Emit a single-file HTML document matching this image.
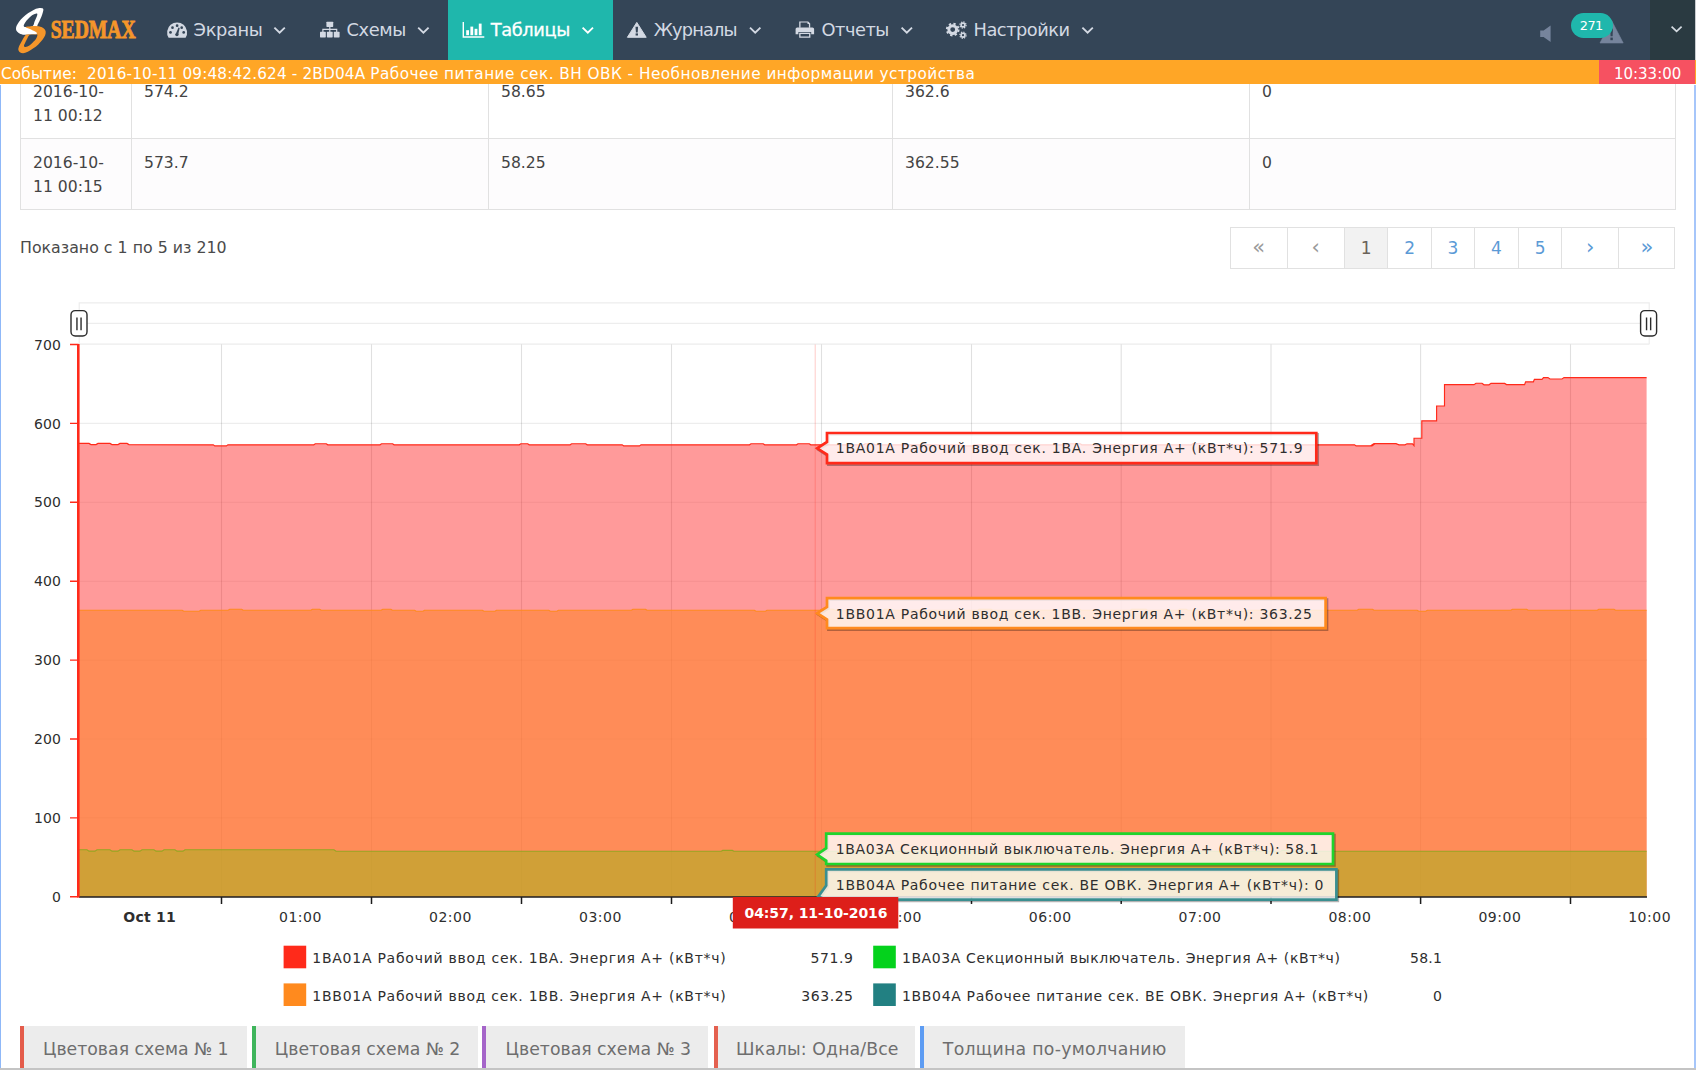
<!DOCTYPE html>
<html lang="ru">
<head>
<meta charset="utf-8">
<title>SEDMAX - Таблицы</title>
<style>
*{box-sizing:border-box;margin:0;padding:0}
html,body{width:1696px;height:1070px;overflow:hidden;background:#fff}
body{font-family:"DejaVu Sans","Liberation Sans",sans-serif;font-size:15.8px;color:#3a3a3a;position:relative}
#nav{z-index:7;position:absolute;left:0;top:0;width:1696px;height:60px;background:#344557}
#nav .it{position:absolute;top:0;height:60px;line-height:60px;font-size:17.8px;color:#d3d9e3;white-space:nowrap}
#nav .act{position:absolute;left:448px;top:0;width:164.5px;height:60px;background:#1fb7ac}
#nav svg{position:absolute}
#nav .dk{position:absolute;left:1650px;top:0;width:45px;height:60px;background:#2a3a41}
#nav .edge{position:absolute;left:1695px;top:0;width:1px;height:60px;background:#c9ccd0}
#badge{position:absolute;left:1571px;top:13px;width:41.5px;height:24.5px;border-radius:12.5px;background:#1fb7ac;color:#fff;font-size:12.9px;letter-spacing:-0.5px;line-height:26.6px;text-align:center;padding-right:1px}
#ev{z-index:5;position:absolute;left:0;top:60px;width:1696px;height:24.3px;background:#ffa626;color:#fff;font-size:15.3px;letter-spacing:0.46px;line-height:28px;white-space:pre;padding-left:1px;overflow:hidden}
#clk{z-index:6;position:absolute;left:1599px;top:60px;width:96.2px;height:24.3px;background:#f65161;color:#fff;font-size:15px;line-height:28px;text-align:center;padding-left:1px}
.ledge{position:absolute;left:0;top:84.5px;width:1.4px;height:985px;background:#8fb8f8}
.redge{position:absolute;left:1694.4px;top:84.5px;width:1.6px;height:985px;background:#a6c6fa}
#tbl{position:absolute;left:20px;top:66.7px;width:1654.4px;border-collapse:collapse;table-layout:fixed}
#tbl td{border:1px solid #e1e1e1;vertical-align:top;padding:12.3px 11.5px 9.7px 12px;line-height:24px;height:71px;font-size:15.6px;color:#444}
#tbl tr.alt td{background:#fdfcfd}
#info{position:absolute;left:20px;top:236px;line-height:24px;font-size:15.8px;color:#4a4a4a;white-space:nowrap}
#pg{position:absolute;left:1230px;top:226.5px;height:42px;width:445px}
#pg span{position:absolute;top:0;height:42px;border:1px solid #e1e1e1;line-height:40px;text-align:center;font-size:17px;color:#5b9ad6;background:#fff}
#pg span.dis{color:#9a9a9a}
#pg span.ar{font-size:21px;line-height:39.6px}
#pg span.cur{background:#f2f2f2;color:#6a6259}
#chart{position:absolute;left:0;top:290px}
#chart text{font-family:"DejaVu Sans","Liberation Sans",sans-serif;font-size:14px;fill:#2e2e2e}
.btn{position:absolute;top:1026px;height:41.5px;background:#ececec;border-left:4.3px solid #e35b4b;color:#6e6e6e;font-size:17.3px;line-height:47px;white-space:nowrap;padding-left:19.2px}
#bot{position:absolute;left:0;top:1068px;width:1696px;height:2px;background:#c4c4c4}
</style>
</head>
<body>
<div id="nav">
 <div class="act"></div>
 <div class="dk"></div>
 <div class="edge"></div>
 <div class="it" style="left:193.6px;letter-spacing:-0.35px">Экраны</div>
 <div class="it" style="left:346.6px;letter-spacing:-0.4px">Схемы</div>
 <div class="it" style="left:490.8px;letter-spacing:-0.4px;color:#fff;-webkit-text-stroke:0.3px #fff">Таблицы</div>
 <div class="it" style="left:653.8px;letter-spacing:-0.85px">Журналы</div>
 <div class="it" style="left:821.6px;letter-spacing:-0.5px">Отчеты</div>
 <div class="it" style="left:973.6px;letter-spacing:-0.5px">Настройки</div>
 <svg width="1696" height="60" viewBox="0 0 1696 60" style="left:0;top:0">
  <!-- logo -->
  <path fill="#fff" fill-rule="evenodd" d="M43.1,8.7 C42.3,8.0 39.9,8.0 38.3,8.2 C36.7,8.4 35.2,9.1 33.6,9.9 C31.9,10.7 30.1,11.8 28.3,13.0 C26.6,14.2 24.7,15.7 23.1,17.2 C21.5,18.7 20.0,20.4 18.9,21.9 C17.8,23.4 17.0,24.9 16.5,26.1 C16.1,27.3 15.9,28.3 16.0,29.2 C16.2,30.2 16.6,31.1 17.3,31.8 C18.1,32.6 19.1,33.4 20.5,33.9 C21.9,34.4 23.8,34.8 25.7,34.8 C27.6,34.9 30.0,34.5 32.0,34.3 C34.0,34.1 36.6,34.8 37.5,33.4 C38.4,32.0 37.0,28.1 37.3,26.1 C37.6,24.1 38.6,22.9 39.3,21.4 C40.0,19.8 40.8,18.1 41.4,16.7 C42.0,15.2 42.5,13.8 42.8,12.5 C43.1,11.1 43.8,9.4 43.1,8.7Z M36.4,13.6 C35.6,13.8 33.9,14.2 32.5,15.1 C31.2,15.9 29.5,17.5 28.3,18.8 C27.1,20.0 26.0,21.2 25.2,22.4 C24.4,23.6 23.6,25.1 23.7,25.8 C23.8,26.6 24.2,27.0 25.7,27.0 C27.2,27.1 31.0,27.1 32.5,26.2 C34.0,25.2 33.9,23.0 34.6,21.4 C35.3,19.8 36.2,17.8 36.7,16.7 C37.2,15.5 37.4,14.8 37.3,14.3 C37.3,13.8 37.2,13.5 36.4,13.6Z"/>
  <path fill="#f5962a" fill-rule="evenodd" d="M25.6,27.1 C25.8,26.7 29.2,26.4 30.9,26.2 C32.7,26.0 34.4,25.8 36.2,26.0 C37.9,26.1 40.0,26.5 41.4,27.0 C42.8,27.6 43.8,28.4 44.6,29.2 C45.3,30.0 45.6,30.8 45.7,31.8 C45.8,32.9 45.6,34.2 45.1,35.5 C44.5,36.8 43.6,38.2 42.5,39.7 C41.3,41.2 39.8,42.9 38.3,44.4 C36.7,45.9 34.8,47.4 33.0,48.6 C31.3,49.8 29.5,51.0 27.8,51.7 C26.1,52.5 24.4,53.1 23.1,53.2 C21.8,53.2 20.8,52.8 19.9,52.3 C19.1,51.7 18.4,50.8 18.3,49.6 C18.2,48.5 18.8,46.9 19.4,45.5 C20.1,44.0 21.1,42.4 22.0,40.7 C23.0,39.1 24.3,36.5 25.2,35.5 C26.1,34.5 26.1,34.8 27.3,34.6 C28.5,34.3 30.9,34.4 32.5,34.2 C34.2,34.0 36.9,33.9 37.2,33.4 C37.6,32.9 35.8,32.1 34.6,31.3 C33.4,30.6 31.4,29.7 29.9,29.0 C28.4,28.3 25.4,27.6 25.6,27.1Z M37.3,34.6 C37.8,35.2 36.9,37.4 36.2,38.6 C35.5,39.9 34.2,41.2 33.0,42.3 C31.9,43.4 30.6,44.7 29.4,45.5 C28.2,46.2 26.6,46.9 25.7,47.0 C24.8,47.1 24.1,46.7 24.0,46.0 C23.9,45.3 24.6,44.1 25.2,42.8 C25.7,41.6 26.6,39.9 27.3,38.6 C28.0,37.4 28.4,35.8 29.5,35.1 C30.5,34.4 32.3,34.7 33.6,34.6 C34.9,34.5 36.9,33.9 37.3,34.6Z"/>
  <text x="50.7" y="37.7" textLength="85" lengthAdjust="spacingAndGlyphs" style="font-family:'Liberation Serif','DejaVu Serif',serif;font-weight:bold;font-size:25.2px;fill:#f5962a;stroke:#f5962a;stroke-width:0.9px">SEDMAX</text>
  <g fill="#d3d9e3" stroke="none">
   <!-- dashboard -->
   <path d="M168.6,37.7 A10,10 0 1 1 185.6,37.7 Z"/>
   <g fill="#344557"><circle cx="170.5" cy="32.4" r="1.35"/><circle cx="172.5" cy="27.7" r="1.35"/><circle cx="177.1" cy="25.7" r="1.35"/><circle cx="181.7" cy="27.7" r="1.35"/><circle cx="183.7" cy="32.4" r="1.35"/><path d="M175.9,33.6 L178.5,27.6 L179.7,28.1 L178.2,34.4 Z"/><circle cx="176.9" cy="34.6" r="1.7"/></g>
   <!-- sitemap -->
   <rect x="326.4" y="21.7" width="6.8" height="5.2" rx="0.6"/><rect x="320" y="31.8" width="5.8" height="5.6" rx="0.6"/><rect x="326.9" y="31.8" width="5.8" height="5.6" rx="0.6"/><rect x="333.8" y="31.8" width="5.8" height="5.6" rx="0.6"/>
   <path d="M329.2,26.5h1.2v2.3h6.9v3.2h-1.2v-2h-5.7v2h-1.2v-2h-5.7v2h-1.2v-3.2h6.9z"/>
   <!-- bar chart -->
   <g fill="#fff"><path d="M462.6,21.9h1.4v14.4h20.3v1.4h-21.7z"/><rect x="466.2" y="30.2" width="2.8" height="5"/><rect x="470.4" y="26.6" width="2.8" height="8.6"/><rect x="474.6" y="28.8" width="2.8" height="6.4"/><rect x="478.8" y="23.6" width="2.8" height="11.6"/></g>
   <!-- warning -->
   <path d="M636.8,22.4 L646.2,37.3 L627.4,37.3 Z" stroke="#d3d9e3" stroke-width="1" stroke-linejoin="round"/>
   <g fill="#344557"><path d="M635.5,26.8h2.6l-0.4,5.6h-1.8z"/><rect x="635.6" y="33.4" width="2.4" height="2.1"/></g>
   <!-- print -->
   <path d="M799.2,21.4h9l2,2v4.4h-1.3v-3.8h-1.4v-1.4h-7v5.2h-1.3z"/><path d="M797.2,27.4h15.2q1.7,0 1.7,1.7v5.2h-2.9v-2.4h-12.8v2.4h-2.8v-5.2q0,-1.7 1.6,-1.7z"/><path d="M799.2,32.8h11.2v4.9h-11.2z M800.5,34.1v2.3h8.6v-2.3z" fill-rule="evenodd"/>
   <!-- cogs -->
   <circle cx="952.7" cy="29.6" r="3.9" fill="none" stroke="#d3d9e3" stroke-width="2.9"/>
   <circle cx="952.7" cy="29.6" r="5.9" fill="none" stroke="#d3d9e3" stroke-width="1.9" stroke-dasharray="2.3 2.334"/>
   <circle cx="963" cy="25" r="1.9" fill="none" stroke="#d3d9e3" stroke-width="1.6"/><circle cx="963" cy="25" r="3.1" fill="none" stroke="#d3d9e3" stroke-width="1.2" stroke-dasharray="1.3 1.13"/>
   <circle cx="963" cy="35.2" r="1.9" fill="none" stroke="#d3d9e3" stroke-width="1.6"/><circle cx="963" cy="35.2" r="3.1" fill="none" stroke="#d3d9e3" stroke-width="1.2" stroke-dasharray="1.3 1.13"/>
  </g>
  <!-- chevrons -->
  <g fill="none" stroke="#d3d9e3" stroke-width="1.9" stroke-linejoin="miter">
   <path d="M274.4,27.6l5.2,5 5.2,-5"/><path d="M418.2,27.6l5.2,5 5.2,-5"/><path d="M750,27.6l5.2,5 5.2,-5"/><path d="M901.6,27.6l5.2,5 5.2,-5"/><path d="M1082.4,27.6l5.2,5 5.2,-5"/>
   <path d="M582.6,27.6l5.2,5 5.2,-5" stroke="#fff"/>
   <path d="M1671.6,26.6l5,4.8 5,-4.8" stroke="#d5dbe2" stroke-width="1.7"/>
  </g>
  <!-- speaker + alert -->
  <path d="M1540.2,30.4h3.4l7,-5v16.6l-7,-5h-3.4z" fill="#76849c"/>
  <path d="M1611.6,20.6 L1623.2,43 L1600,43 Z" fill="#76849c" stroke="#76849c" stroke-width="0.6" stroke-linejoin="round"/>
  <g fill="#344557"><path d="M1610.2,28.6h2.8l-0.4,7.6h-2z"/><rect x="1610.4" y="37.6" width="2.4" height="2.6"/></g>
 </svg>
 <div id="badge">271</div>
</div>
<div id="ev"><span style="letter-spacing:0.14px">Событие:  2016-10-11 09:48:42.624 - 2BD04A </span>Рабочее питание сек. ВН ОВК - Необновление информации устройства</div>
<div id="clk">10:33:00</div>
<div class="ledge"></div><div class="redge"></div>

<table id="tbl">
 <colgroup><col style="width:111px"><col style="width:357px"><col style="width:404px"><col style="width:357px"><col style="width:426px"></colgroup>
 <tr><td>2016-10-<br>11 00:12</td><td>574.2</td><td>58.65</td><td>362.6</td><td>0</td></tr>
 <tr class="alt"><td>2016-10-<br>11 00:15</td><td>573.7</td><td>58.25</td><td>362.55</td><td>0</td></tr>
</table>
<div id="info">Показано с 1 по 5 из 210</div>
<div id="pg">
 <span class="dis ar" style="left:0;width:57.6px">«</span><span class="dis ar" style="left:56.6px;width:58.4px">‹</span><span class="cur" style="left:114px;width:44.4px">1</span><span style="left:157.4px;width:44.4px">2</span><span style="left:200.8px;width:44.2px">3</span><span style="left:244px;width:45px">4</span><span style="left:288px;width:44.2px">5</span><span class="ar" style="left:331.2px;width:58.2px">›</span><span class="ar" style="left:388.4px;width:57px">»</span>
</div>

<svg id="chart" width="1696" height="735" viewBox="0 290 1696 735">
<g fill="none" stroke="#ededed" stroke-width="1.2"><path d="M79.2,344.3V302.8H1649.2V344.3"/><path d="M79.2,323.3H1649.2"/><path d="M79,344.2H1649.2" stroke="#ececec"/></g>
<path d="M221.5,344.5V896.8 M371.5,344.5V896.8 M521.5,344.5V896.8 M671.5,344.5V896.8 M821.5,344.5V896.8 M971.5,344.5V896.8 M1121.2,344.5V896.8 M1271,344.5V896.8 M1420.6,344.5V896.8 M1570.5,344.5V896.8" fill="none" stroke="#000" stroke-opacity="0.12" stroke-width="1.1"/>
<path d="M79,817.9H1647 M79,739.0H1647 M79,660.1H1647 M79,581.2H1647 M79,502.3H1647 M79,423.4H1647" fill="none" stroke="#000" stroke-opacity="0.07" stroke-width="1.1"/>
<path d="M79.0,443.4 L89.0,443.4 L91.0,444.6 L96.0,444.6 L98.0,443.4 L110.0,443.4 L112.0,444.6 L118.0,444.6 L120.0,443.4 L127.0,443.4 L129.0,444.6 L213.3,444.8 L214.8,445.9 L226.4,445.9 L227.9,444.8 L313.8,444.8 L315.3,443.7 L326.3,443.7 L327.8,444.8 L380.0,444.8 L381.5,443.7 L392.6,443.7 L394.1,444.8 L519.3,444.8 L520.8,443.7 L527.7,443.7 L529.2,444.8 L570.1,444.8 L571.6,443.7 L585.7,443.7 L587.2,444.8 L622.2,444.8 L623.7,445.9 L639.5,445.9 L641.0,444.8 L749.5,444.8 L751.0,443.7 L763.2,443.7 L764.7,444.8 L796.5,444.8 L798.0,443.7 L809.3,443.7 L810.8,444.8 L863.6,444.8 L865.1,443.7 L873.5,443.7 L875.0,444.8 L960.7,444.8 L962.2,445.9 L972.6,445.9 L974.1,444.8 L1066.4,444.8 L1067.9,443.7 L1080.3,443.7 L1081.8,444.8 L1191.3,444.8 L1192.8,443.7 L1203.3,443.7 L1204.8,444.8 L1354.6,444.8 L1356.1,445.9 L1372.0,445.9 L1373.5,444.8 L1372.0,444.8 L1374.0,443.6 L1396.0,443.6 L1399.0,444.8 L1405.0,444.8 L1407.0,443.8 L1412.5,443.8 L1414.0,445.6 L1414.0,438.2 L1421.8,438.2 L1421.8,420.8 L1436.6,420.8 L1436.6,406.0 L1444.5,406.0 L1444.5,384.6 L1474.0,384.6 L1476.0,383.2 L1482.0,383.2 L1484.0,384.8 L1489.0,384.8 L1491.0,383.4 L1504.7,383.4 L1506.5,384.6 L1524.6,384.6 L1525.6,381.8 L1533.4,381.8 L1534.4,379.4 L1542.0,379.4 L1543.5,377.6 L1548.0,377.6 L1550.0,379.0 L1562.0,379.0 L1564.0,377.6 L1646.6,377.6 L1646.6,896.8 L79.0,896.8 Z" fill="#ff0f0f" fill-opacity="0.42"/>
<path d="M79.0,443.4 L89.0,443.4 L91.0,444.6 L96.0,444.6 L98.0,443.4 L110.0,443.4 L112.0,444.6 L118.0,444.6 L120.0,443.4 L127.0,443.4 L129.0,444.6 L213.3,444.8 L214.8,445.9 L226.4,445.9 L227.9,444.8 L313.8,444.8 L315.3,443.7 L326.3,443.7 L327.8,444.8 L380.0,444.8 L381.5,443.7 L392.6,443.7 L394.1,444.8 L519.3,444.8 L520.8,443.7 L527.7,443.7 L529.2,444.8 L570.1,444.8 L571.6,443.7 L585.7,443.7 L587.2,444.8 L622.2,444.8 L623.7,445.9 L639.5,445.9 L641.0,444.8 L749.5,444.8 L751.0,443.7 L763.2,443.7 L764.7,444.8 L796.5,444.8 L798.0,443.7 L809.3,443.7 L810.8,444.8 L863.6,444.8 L865.1,443.7 L873.5,443.7 L875.0,444.8 L960.7,444.8 L962.2,445.9 L972.6,445.9 L974.1,444.8 L1066.4,444.8 L1067.9,443.7 L1080.3,443.7 L1081.8,444.8 L1191.3,444.8 L1192.8,443.7 L1203.3,443.7 L1204.8,444.8 L1354.6,444.8 L1356.1,445.9 L1372.0,445.9 L1373.5,444.8 L1372.0,444.8 L1374.0,443.6 L1396.0,443.6 L1399.0,444.8 L1405.0,444.8 L1407.0,443.8 L1412.5,443.8 L1414.0,445.6 L1414.0,438.2 L1421.8,438.2 L1421.8,420.8 L1436.6,420.8 L1436.6,406.0 L1444.5,406.0 L1444.5,384.6 L1474.0,384.6 L1476.0,383.2 L1482.0,383.2 L1484.0,384.8 L1489.0,384.8 L1491.0,383.4 L1504.7,383.4 L1506.5,384.6 L1524.6,384.6 L1525.6,381.8 L1533.4,381.8 L1534.4,379.4 L1542.0,379.4 L1543.5,377.6 L1548.0,377.6 L1550.0,379.0 L1562.0,379.0 L1564.0,377.6 L1646.6,377.6" fill="none" stroke="#ff2a1a" stroke-width="1.15"/>
<path d="M79.0,610.2 L182.2,610.2 L183.7,611.2 L199.2,611.2 L200.7,610.2 L228.2,610.2 L229.7,609.2 L241.7,609.2 L243.2,610.2 L310.9,610.2 L312.4,609.2 L319.7,609.2 L321.2,610.2 L381.2,610.2 L382.7,609.2 L390.9,609.2 L392.4,610.2 L414.6,610.2 L416.1,611.2 L423.0,611.2 L424.5,610.2 L482.4,610.2 L483.9,611.2 L495.0,611.2 L496.5,610.2 L548.8,610.2 L550.3,611.2 L556.9,611.2 L558.4,610.2 L631.4,610.2 L632.9,609.2 L645.5,609.2 L647.0,610.2 L754.4,610.2 L755.9,611.2 L765.5,611.2 L767.0,610.2 L820.2,610.2 L821.7,609.2 L833.4,609.2 L834.9,610.2 L883.2,610.2 L884.7,609.2 L891.6,609.2 L893.1,610.2 L977.7,610.2 L979.2,609.2 L991.1,609.2 L992.6,610.2 L1070.4,610.2 L1071.9,609.2 L1079.7,609.2 L1081.2,610.2 L1130.3,610.2 L1131.8,609.2 L1146.0,609.2 L1147.5,610.2 L1177.8,610.2 L1179.3,609.2 L1186.2,609.2 L1187.7,610.2 L1232.5,610.2 L1234.0,611.2 L1245.8,611.2 L1247.3,610.2 L1297.0,610.2 L1298.5,609.2 L1308.2,609.2 L1309.7,610.2 L1357.2,610.2 L1358.7,609.2 L1372.5,609.2 L1374.0,610.2 L1417.2,610.2 L1418.7,611.2 L1425.8,611.2 L1427.3,610.2 L1510.9,610.2 L1512.4,609.2 L1526.7,609.2 L1528.2,610.2 L1597.3,610.2 L1598.8,609.2 L1614.0,609.2 L1615.5,610.2 L1646.6,610.2 L1646.6,896.8 L79.0,896.8 Z" fill="rgb(255,133,48)" fill-opacity="0.62"/>
<path d="M79.0,610.2 L182.2,610.2 L183.7,611.2 L199.2,611.2 L200.7,610.2 L228.2,610.2 L229.7,609.2 L241.7,609.2 L243.2,610.2 L310.9,610.2 L312.4,609.2 L319.7,609.2 L321.2,610.2 L381.2,610.2 L382.7,609.2 L390.9,609.2 L392.4,610.2 L414.6,610.2 L416.1,611.2 L423.0,611.2 L424.5,610.2 L482.4,610.2 L483.9,611.2 L495.0,611.2 L496.5,610.2 L548.8,610.2 L550.3,611.2 L556.9,611.2 L558.4,610.2 L631.4,610.2 L632.9,609.2 L645.5,609.2 L647.0,610.2 L754.4,610.2 L755.9,611.2 L765.5,611.2 L767.0,610.2 L820.2,610.2 L821.7,609.2 L833.4,609.2 L834.9,610.2 L883.2,610.2 L884.7,609.2 L891.6,609.2 L893.1,610.2 L977.7,610.2 L979.2,609.2 L991.1,609.2 L992.6,610.2 L1070.4,610.2 L1071.9,609.2 L1079.7,609.2 L1081.2,610.2 L1130.3,610.2 L1131.8,609.2 L1146.0,609.2 L1147.5,610.2 L1177.8,610.2 L1179.3,609.2 L1186.2,609.2 L1187.7,610.2 L1232.5,610.2 L1234.0,611.2 L1245.8,611.2 L1247.3,610.2 L1297.0,610.2 L1298.5,609.2 L1308.2,609.2 L1309.7,610.2 L1357.2,610.2 L1358.7,609.2 L1372.5,609.2 L1374.0,610.2 L1417.2,610.2 L1418.7,611.2 L1425.8,611.2 L1427.3,610.2 L1510.9,610.2 L1512.4,609.2 L1526.7,609.2 L1528.2,610.2 L1597.3,610.2 L1598.8,609.2 L1614.0,609.2 L1615.5,610.2 L1646.6,610.2" fill="none" stroke="#ff8a1e" stroke-width="1.1"/>
<path d="M79.0,849.8 L87.0,849.8 L89.0,851.1 L95.0,851.1 L97.0,849.8 L110.0,849.8 L112.0,851.1 L118.0,851.1 L120.0,849.8 L132.0,849.8 L134.0,851.1 L140.0,851.1 L142.0,849.8 L154.0,849.8 L156.0,851.1 L162.0,851.1 L164.0,849.8 L175.0,849.8 L177.0,851.1 L183.0,851.1 L185.0,849.8 L334.0,849.8 L336.0,851.2 L721.2,851.2 L722.7,850.4 L732.4,850.4 L733.9,851.2 L1280.6,851.2 L1282.1,850.4 L1288.1,850.4 L1289.6,851.2 L1646.6,851.2 L1646.6,896.8 L79.0,896.8 Z" fill="rgb(179,172,35)" fill-opacity="0.62"/>
<path d="M79.0,849.8 L87.0,849.8 L89.0,851.1 L95.0,851.1 L97.0,849.8 L110.0,849.8 L112.0,851.1 L118.0,851.1 L120.0,849.8 L132.0,849.8 L134.0,851.1 L140.0,851.1 L142.0,849.8 L154.0,849.8 L156.0,851.1 L162.0,851.1 L164.0,849.8 L175.0,849.8 L177.0,851.1 L183.0,851.1 L185.0,849.8 L334.0,849.8 L336.0,851.2 L721.2,851.2 L722.7,850.4 L732.4,850.4 L733.9,851.2 L1280.6,851.2 L1282.1,850.4 L1288.1,850.4 L1289.6,851.2 L1646.6,851.2" fill="none" stroke="#96a522" stroke-width="1.1"/>
<path d="M815.2,344.5V896.8" stroke="#ff2a1a" stroke-opacity="0.22" stroke-width="1.1"/>
<path d="M79,896.9H1647 M221.5,896.8V904 M371.5,896.8V904 M521.5,896.8V904 M671.5,896.8V904 M821.5,896.8V904 M971.5,896.8V904 M1121.2,896.8V904 M1271,896.8V904 M1420.6,896.8V904 M1570.5,896.8V904" fill="none" stroke="#1c1c1c" stroke-width="1.5"/>
<path d="M78.3,344V897.5" stroke="#ff2a1a" stroke-width="2.6" fill="none"/><path d="M70,896.8H78.5 M70,817.9H78.5 M70,739.0H78.5 M70,660.1H78.5 M70,581.2H78.5 M70,502.3H78.5 M70,423.4H78.5 M70,344.5H78.5" stroke="#ff2a1a" stroke-width="1.4" fill="none"/>
<text x="60.8" y="901.9" text-anchor="end">0</text>
<text x="60.8" y="823.0" text-anchor="end">100</text>
<text x="60.8" y="744.1" text-anchor="end">200</text>
<text x="60.8" y="665.2" text-anchor="end">300</text>
<text x="60.8" y="586.3" text-anchor="end">400</text>
<text x="60.8" y="507.4" text-anchor="end">500</text>
<text x="60.8" y="428.5" text-anchor="end">600</text>
<text x="60.8" y="349.6" text-anchor="end">700</text>
<text x="149.5" y="921.8" text-anchor="middle" font-weight="bold" textLength="52.3" lengthAdjust="spacing">Oct 11</text>
<text x="300.2" y="921.8" text-anchor="middle" textLength="42.4" lengthAdjust="spacing">01:00</text>
<text x="450.2" y="921.8" text-anchor="middle" textLength="42.4" lengthAdjust="spacing">02:00</text>
<text x="600.2" y="921.8" text-anchor="middle" textLength="42.4" lengthAdjust="spacing">03:00</text>
<text x="750.2" y="921.8" text-anchor="middle" textLength="42.4" lengthAdjust="spacing">04:00</text>
<text x="900.2" y="921.8" text-anchor="middle" textLength="42.4" lengthAdjust="spacing">05:00</text>
<text x="1050" y="921.8" text-anchor="middle" textLength="42.4" lengthAdjust="spacing">06:00</text>
<text x="1199.8" y="921.8" text-anchor="middle" textLength="42.4" lengthAdjust="spacing">07:00</text>
<text x="1349.6" y="921.8" text-anchor="middle" textLength="42.4" lengthAdjust="spacing">08:00</text>
<text x="1499.6" y="921.8" text-anchor="middle" textLength="42.4" lengthAdjust="spacing">09:00</text>
<text x="1649.4" y="921.8" text-anchor="middle" textLength="42.4" lengthAdjust="spacing">10:00</text>
<rect x="71" y="310.6" width="16" height="25.4" rx="4.2" fill="#fff" stroke="#2b2b2b" stroke-width="1.4"/><path d="M76.95,317.6V330.2M81.05,317.6V330.2" stroke="#2b2b2b" stroke-width="1.4"/>
<rect x="1640.6" y="310.6" width="16" height="25.4" rx="4.2" fill="#fff" stroke="#2b2b2b" stroke-width="1.4"/><path d="M1646.55,317.6V330.2M1650.6499999999999,317.6V330.2" stroke="#2b2b2b" stroke-width="1.4"/>
<path d="M827,433H1316.3V463.2H827V454.6L817.2,448.3L827,442.0Z" transform="translate(1.4,1.4)" fill="none" stroke="#000" stroke-opacity="0.3" stroke-width="2.7"/><path d="M827,433H1316.3V463.2H827V454.6L817.2,448.3L827,442.0Z" fill="#fff" fill-opacity="0.8" stroke="#ff2a1a" stroke-width="2.7" stroke-linejoin="miter"/><text x="835.8" y="453.4" textLength="466.8" lengthAdjust="spacing">1BA01A Рабочий ввод сек. 1BA. Энергия А+ (кВт*ч): 571.9</text>
<path d="M827,598.2H1325.6V628.2H827V619.5L817.2,613.2L827,606.9000000000001Z" transform="translate(1.4,1.4)" fill="none" stroke="#000" stroke-opacity="0.3" stroke-width="2.7"/><path d="M827,598.2H1325.6V628.2H827V619.5L817.2,613.2L827,606.9000000000001Z" fill="#fff" fill-opacity="0.8" stroke="#ff8a1e" stroke-width="2.7" stroke-linejoin="miter"/><text x="835.8" y="618.5" textLength="476.2" lengthAdjust="spacing">1BB01A Рабочий ввод сек. 1BB. Энергия А+ (кВт*ч): 363.25</text>
<path d="M826.2,833.6H1333V864H826.2V860.8L817.2,854.5L826.2,848.2Z" transform="translate(1.4,1.4)" fill="none" stroke="#000" stroke-opacity="0.3" stroke-width="2.7"/><path d="M826.2,833.6H1333V864H826.2V860.8L817.2,854.5L826.2,848.2Z" fill="#fff" fill-opacity="0.8" stroke="#1fd42c" stroke-width="2.7" stroke-linejoin="miter"/><text x="835.8" y="854.1" textLength="482.6" lengthAdjust="spacing">1BA03A Секционный выключатель. Энергия А+ (кВт*ч): 58.1</text>
<path d="M826.2,869.4H1336.4V899.6H825.2L818.2,896.6L826.2,885.6Z" transform="translate(1.4,1.4)" fill="none" stroke="#000" stroke-opacity="0.3" stroke-width="2.7"/><path d="M826.2,869.4H1336.4V899.6H825.2L818.2,896.6L826.2,885.6Z" fill="#fff" fill-opacity="0.8" stroke="#3a8f90" stroke-width="2.7" stroke-linejoin="miter"/><text x="835.8" y="889.8" textLength="487.6" lengthAdjust="spacing">1BB04A Рабочее питание сек. ВЕ ОВК. Энергия А+ (кВт*ч): 0</text>
<rect x="732.8" y="897" width="165.5" height="31.5" fill="#dd1f1a"/>
<text x="744.5" y="917.8" font-weight="bold" textLength="143" lengthAdjust="spacing" style="fill:#fff">04:57, 11-10-2016</text>
<rect x="283.6" y="945.7" width="22.6" height="22.6" fill="#ff2a1a"/><text x="312.3" y="963.3000000000001" textLength="413.5" lengthAdjust="spacing">1BA01A Рабочий ввод сек. 1BA. Энергия А+ (кВт*ч)</text><text x="853" y="963.3000000000001" text-anchor="end" textLength="42.6" lengthAdjust="spacing">571.9</text>
<rect x="283.6" y="983.4" width="22.6" height="22.6" fill="#ff8a1e"/><text x="312.3" y="1001.0" textLength="413.5" lengthAdjust="spacing">1BB01A Рабочий ввод сек. 1BB. Энергия А+ (кВт*ч)</text><text x="853" y="1001.0" text-anchor="end" textLength="51.7" lengthAdjust="spacing">363.25</text>
<rect x="873.2" y="945.7" width="22.6" height="22.6" fill="#04d21c"/><text x="901.9000000000001" y="963.3000000000001" textLength="438" lengthAdjust="spacing">1BA03A Секционный выключатель. Энергия А+ (кВт*ч)</text><text x="1442" y="963.3000000000001" text-anchor="end" textLength="32" lengthAdjust="spacing">58.1</text>
<rect x="873.2" y="983.4" width="22.6" height="22.6" fill="#228082"/><text x="901.9000000000001" y="1001.0" textLength="466.4" lengthAdjust="spacing">1BB04A Рабочее питание сек. ВЕ ОВК. Энергия А+ (кВт*ч)</text><text x="1442" y="1001.0" text-anchor="end" >0</text>
</svg>
<div class="btn" style="left:19.8px;width:227.4px;border-left-color:#e45c4b">Цветовая схема № 1</div>
<div class="btn" style="left:251.6px;width:226px;border-left-color:#3fb55c">Цветовая схема № 2</div>
<div class="btn" style="left:482.4px;width:226px;border-left-color:#a565c9">Цветовая схема № 3</div>
<div class="btn" style="left:714px;width:201px;border-left-color:#e4604f;padding-left:18px;letter-spacing:0.12px">Шкалы: Одна/Все</div>
<div class="btn" style="left:919.6px;width:265.6px;border-left-color:#5d9cf3;letter-spacing:0.3px">Толщина по-умолчанию</div>
<div id="bot"></div>

</body>
</html>
